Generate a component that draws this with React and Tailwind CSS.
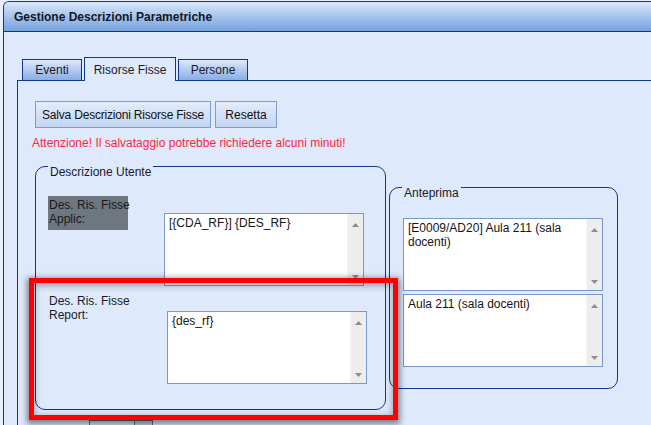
const Arrow = ({ down }) => (
  <svg width="7" height="4" viewBox="0 0 7 4">
    <path d={down ? 'M0 0 L7 0 L3.5 4 Z' : 'M3.5 0 L7 4 L0 4 Z'} fill="#8c8c8c" />
  </svg>
)

// finto textarea con scrollbar classica
const TextBox = ({ children, className }) => (
  <div className={`flex w-[200px] h-[73px] border border-[#7b97cc] bg-white ${className}`}>
    <div className="flex-1 pl-[4px] pt-[2px] leading-[14px] text-[#141414]">{children}</div>
    <div className="w-[16px] bg-[#ededed] border-l border-[#f4f4f4] flex flex-col items-center justify-between pt-[9px] pb-[6px]">
      <Arrow />
      <Arrow down />
    </div>
  </div>
)

const Tab = ({ label, width, active }) =>
  active ? (
    <div className={`${width} h-[24px] -mb-[1px] relative z-10 border-t border-l border-r border-[#12358f] bg-[#dee9fb] flex items-center justify-center pt-[1px]`}>
      {label}
    </div>
  ) : (
    <div className={`${width} h-[21px] border-t border-l border-r border-[#12358f] bg-gradient-to-b from-[#dce9fb] to-[#8aade3] flex items-center justify-center`}>
      {label}
    </div>
  )

export default function App() {
  return (
    <div
      className="relative w-[651px] h-[425px] overflow-hidden bg-[#eaf1fc] text-[12px] leading-[14px] text-[#1a1a2a]"
      style={{ fontFamily: '"Liberation Sans", Arial, sans-serif' }}
    >
      <div className="ml-[3px] mt-[1px] w-[700px] h-[500px] border-l border-t border-[#12358f] rounded-tl-[6px] overflow-hidden bg-[#dee9fb]">
        {/* header */}
        <div className="h-[30px] border-b border-[#12358f] bg-gradient-to-b from-[#d8e7fa] to-[#75a1de] pl-[10px] flex items-center font-bold text-[#111827]">
          Gestione Descrizioni Parametriche
        </div>

        <div className="pl-[13px] pt-[25px]">
          {/* tabs */}
          <div className="flex items-end gap-[2px] ml-[5px]">
            <Tab label="Eventi" width="w-[60px]" />
            <Tab label="Risorse Fisse" width="w-[92px]" active />
            <Tab label="Persone" width="w-[70px]" />
          </div>

          <div className="border-l border-t border-[#12358f] pl-[17px] pt-[20px] h-[400px]">
            <div className="flex gap-[4px]">
              <button className="w-[176px] h-[27px] border border-[#7c9cd4] bg-gradient-to-b from-[#e2ecfb] to-[#c3d6f3] text-[#111] tracking-[-0.2px]">
                Salva Descrizioni Risorse Fisse
              </button>
              <button className="w-[62px] h-[27px] border border-[#7c9cd4] bg-gradient-to-b from-[#e2ecfb] to-[#c3d6f3] text-[#111]">
                Resetta
              </button>
            </div>

            <div className="mt-[8px] -ml-[3px] text-[#ff1f3f]">
              Attenzione! Il salvataggio potrebbe richiedere alcuni minuti!
            </div>

            <div className="flex items-start mt-[3px]">
              <fieldset className="w-[351px] border border-[#12358f] rounded-[10px] px-[12px] pb-[25px]">
                <legend className="px-[2px] pt-[12px] leading-[14px]">Descrizione Utente</legend>
                <div className="flex items-start mt-[17px]">
                  <div className="w-[80px] whitespace-nowrap bg-[#6e7680] pl-[1px] pt-[2px] pb-[4px] text-[#1a1a1a]">
                    Des. Ris. Fisse<br />Applic:
                  </div>
                  <TextBox className="mt-[17px] ml-[36px]">[{'{'}CDA_RF{'}'}] {'{'}DES_RF{'}'}</TextBox>
                </div>
                <div className="flex items-start mt-[8px]">
                  <div className="w-[80px] whitespace-nowrap pl-[1px]">
                    Des. Ris. Fisse<br />Report:
                  </div>
                  <TextBox className="mt-[17px] ml-[39px]">{'{'}des_rf{'}'}</TextBox>
                </div>
              </fieldset>

              <fieldset className="w-[229px] ml-[3px] mt-[21px] border border-[#12358f] rounded-[10px] px-[13px] pb-[21px]">
                <legend className="-ml-[1px] px-[2px] pt-[12px] leading-[14px]">Anteprima</legend>
                <TextBox className="mt-[18px]">
                  [E0009/AD20] Aula 211 (sala<br />docenti)
                </TextBox>
                <TextBox className="mt-[3px]">Aula 211 (sala docenti)</TextBox>
              </fieldset>
            </div>

            <div className="mt-[10px] ml-[54px] w-[64px] h-[20px] border border-[#5c6b8a] bg-[#d6deea] flex justify-end">
              <div className="w-[18px] border-l border-[#5c6b8a] bg-[#c4cedd]" />
            </div>
          </div>
        </div>
      </div>

      {/* riquadro rosso di evidenziazione */}
      <div className="absolute left-[29px] top-[278px] w-[369px] h-[142px] border-[5px] border-[#ff0000] shadow-[0_2px_6px_2px_rgba(0,0,0,0.45),inset_0_2px_6px_1px_rgba(0,0,0,0.3)]" />
    </div>
  )
}
